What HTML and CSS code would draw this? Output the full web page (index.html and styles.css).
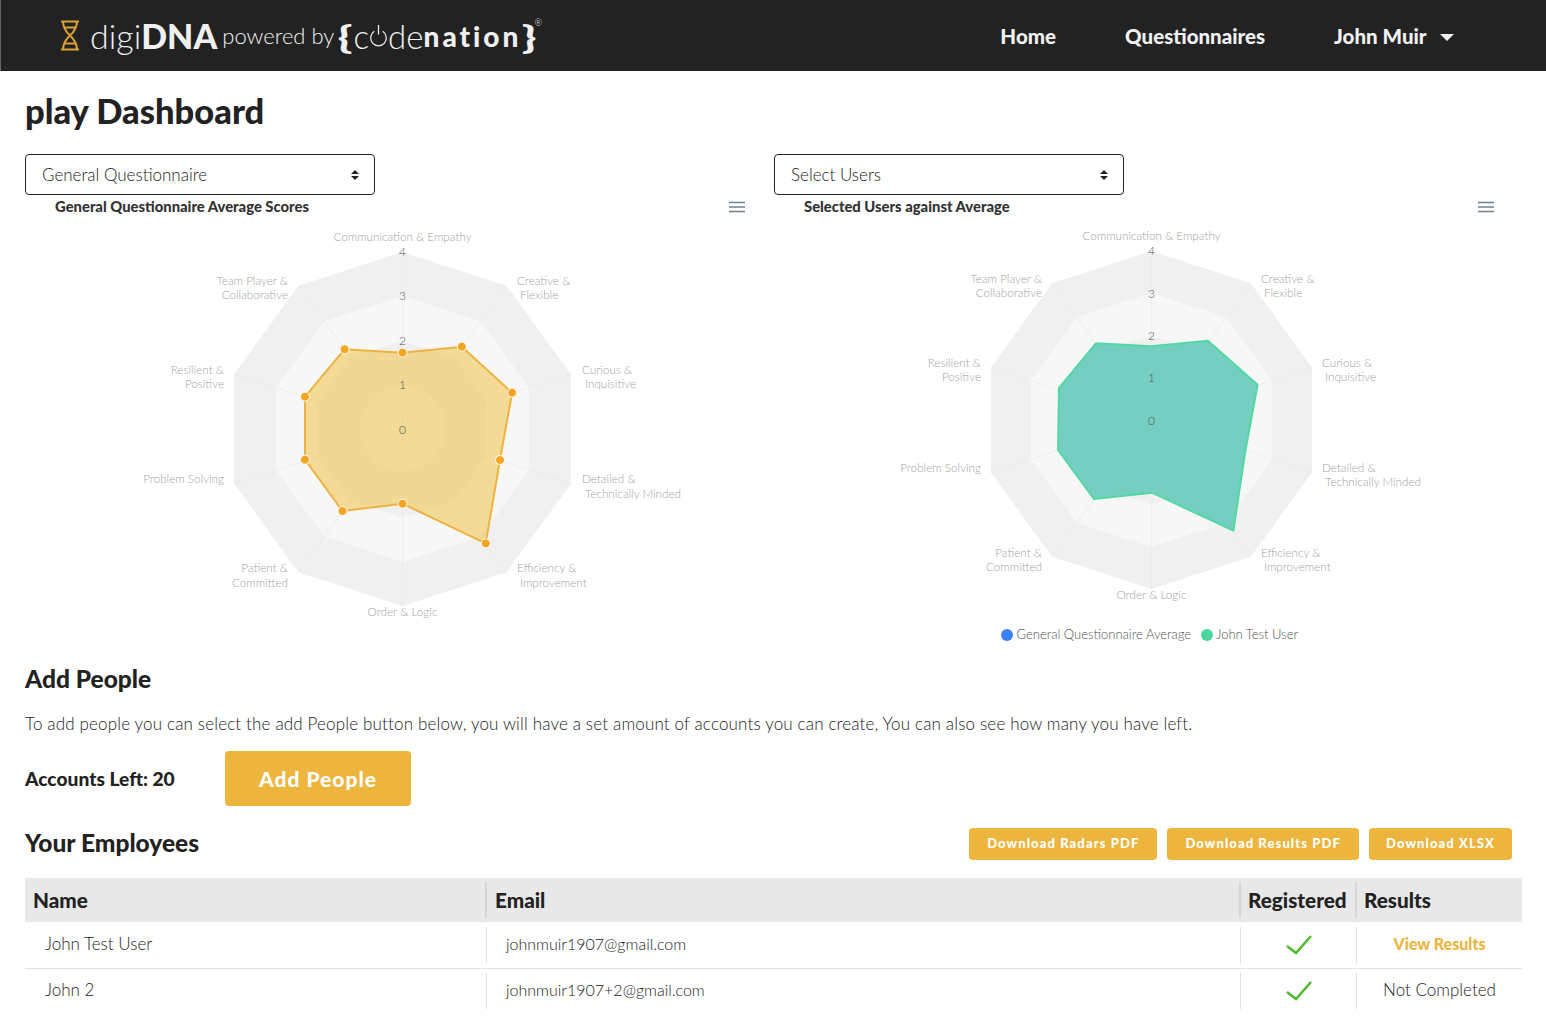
FILE: index.html
```html
<!DOCTYPE html>
<html lang="en">
<head>
    <meta charset="UTF-8">
    <meta name="viewport" content="width=device-width, initial-scale=1.0">
    <title>digiDNA Dashboard</title>
    <link rel="stylesheet" href="styles.css">
</head>
<body>
    <header class="topbar">
        <div class="logo">
            <svg class="logo-icon" viewBox="0 0 20 31" width="20" height="31">
                <path d="M3 1C3 7 5 11 10 15.500C15 20 17 24 17 30M17 1C17 7 15 11 10 15.500C5 20 3 24 3 30M1 1.500H19M4 7.500H16M4 23.500H16M1 29.500H19"/>
            </svg>
            <span class="logo-digi">digi<b>DNA</b></span>
            <span class="logo-by">powered by</span>
            <span class="logo-brace">{</span>
            <span class="logo-code">c<svg class="logo-power" viewBox="0 0 18 24" width="19" height="25"><path d="M5 8A7.500 7.500 0 1 0 13 8M9 2V11"/></svg>de</span>
            <span class="logo-nation">nation</span>
            <span class="logo-brace">}</span>
            <span class="logo-reg">®</span>
        </div>
        <nav class="nav">
            <a href="#">Home</a>
            <a href="#">Questionnaires</a>
            <a href="#" class="nav-user">John Muir <span class="caret"></span></a>
        </nav>
    </header>

    <main class="page">
        <h1>play Dashboard</h1>

        <div class="charts">
            <section>
                <div class="select">General Questionnaire <span class="updown"></span></div>
                <svg class="chart" viewBox="25 195 749 455" width="749" height="455">
                    <text class="chart-title" x="55" y="212">General Questionnaire Average Scores</text>
                    <path class="menu-icon" d="M729 202.500H745M729 207H745M729 211.500H745"/>

                    <g transform="translate(402.500 429)">
                        <polygon class="ring-a" transform="scale(1.77)" points="0,-100 58.800,-80.900 95.100,-30.900 95.100,30.900 58.800,80.900 0,100 -58.800,80.900 -95.100,30.900 -95.100,-30.900 -58.800,-80.900"/>
                        <polygon class="ring-b" transform="scale(1.33)" points="0,-100 58.800,-80.900 95.100,-30.900 95.100,30.900 58.800,80.900 0,100 -58.800,80.900 -95.100,30.900 -95.100,-30.900 -58.800,-80.900"/>
                        <polygon class="ring-a" transform="scale(.885)" points="0,-100 58.800,-80.900 95.100,-30.900 95.100,30.900 58.800,80.900 0,100 -58.800,80.900 -95.100,30.900 -95.100,-30.900 -58.800,-80.900"/>
                        <polygon class="ring-b" transform="scale(.44)" points="0,-100 58.800,-80.900 95.100,-30.900 95.100,30.900 58.800,80.900 0,100 -58.800,80.900 -95.100,30.900 -95.100,-30.900 -58.800,-80.900"/>
                        <path class="spokes" transform="scale(1.77)" d="M0 -100V100M58.800 -80.900L-58.800 80.900M95.100 -30.900L-95.100 30.900M95.100 30.900L-95.100 -30.900M58.800 80.900L-58.800 -80.900"/>
                    </g>

                    <polygon class="area-gold" points="402.500,352.700 461.800,346.700 512.100,392.700 500,460 485.700,543.300 402.500,503.700 342.500,511 305,459.700 305,396.700 344.600,349.300"/>
                    <g class="dots">
                        <circle cx="402.500" cy="352.700" r="4.500"/>
                        <circle cx="461.800" cy="346.700" r="4.500"/>
                        <circle cx="512.100" cy="392.700" r="4.500"/>
                        <circle cx="500" cy="460" r="4.500"/>
                        <circle cx="485.700" cy="543.300" r="4.500"/>
                        <circle cx="402.500" cy="503.700" r="4.500"/>
                        <circle cx="342.500" cy="511" r="4.500"/>
                        <circle cx="305" cy="459.700" r="4.500"/>
                        <circle cx="305" cy="396.700" r="4.500"/>
                        <circle cx="344.600" cy="349.300" r="4.500"/>
                    </g>

                    <g class="scale">
                        <text x="402.500" y="256">4</text>
                        <text x="402.500" y="300">3</text>
                        <text x="402.500" y="345">2</text>
                        <text x="402.500" y="389">1</text>
                        <text x="402.500" y="434">0</text>
                    </g>

                    <g class="labels">
                        <text x="402.500" y="241" text-anchor="middle">Communication &amp; Empathy</text>
                        <text x="517" y="285">Creative &amp;</text>
                        <text x="520" y="299">Flexible</text>
                        <text x="582" y="374">Curious &amp;</text>
                        <text x="585" y="388">Inquisitive</text>
                        <text x="582" y="483">Detailed &amp;</text>
                        <text x="585" y="498">Technically Minded</text>
                        <text x="517" y="572">Efficiency &amp;</text>
                        <text x="520" y="587">Improvement</text>
                        <text x="402.500" y="616" text-anchor="middle">Order &amp; Logic</text>
                        <text x="288" y="572" text-anchor="end">Patient &amp;</text>
                        <text x="288" y="587" text-anchor="end">Committed</text>
                        <text x="224" y="483" text-anchor="end">Problem Solving</text>
                        <text x="224" y="374" text-anchor="end">Resilient &amp;</text>
                        <text x="224" y="388" text-anchor="end">Positive</text>
                        <text x="288" y="285" text-anchor="end">Team Player &amp;</text>
                        <text x="288" y="299" text-anchor="end">Collaborative</text>
                    </g>
                </svg>
            </section>

            <section>
                <div class="select">Select Users <span class="updown"></span></div>
                <svg class="chart" viewBox="774 195 748 455" width="748" height="455">
                    <text class="chart-title" x="804" y="212">Selected Users against Average</text>
                    <path class="menu-icon" d="M1478 202.500H1494M1478 207H1494M1478 211.500H1494"/>

                    <g transform="translate(1151.500 420)">
                        <polygon class="ring-a" transform="scale(1.69)" points="0,-100 58.800,-80.900 95.100,-30.900 95.100,30.900 58.800,80.900 0,100 -58.800,80.900 -95.100,30.900 -95.100,-30.900 -58.800,-80.900"/>
                        <polygon class="ring-b" transform="scale(1.27)" points="0,-100 58.800,-80.900 95.100,-30.900 95.100,30.900 58.800,80.900 0,100 -58.800,80.900 -95.100,30.900 -95.100,-30.900 -58.800,-80.900"/>
                        <polygon class="ring-a" transform="scale(.845)" points="0,-100 58.800,-80.900 95.100,-30.900 95.100,30.900 58.800,80.900 0,100 -58.800,80.900 -95.100,30.900 -95.100,-30.900 -58.800,-80.900"/>
                        <polygon class="ring-b" transform="scale(.42)" points="0,-100 58.800,-80.900 95.100,-30.900 95.100,30.900 58.800,80.900 0,100 -58.800,80.900 -95.100,30.900 -95.100,-30.900 -58.800,-80.900"/>
                        <path class="spokes" transform="scale(1.69)" d="M0 -100V100M58.800 -80.900L-58.800 80.900M95.100 -30.900L-95.100 30.900M95.100 30.900L-95.100 -30.900M58.800 80.900L-58.800 -80.900"/>
                    </g>

                    <polygon class="area-green" points="1151,346.300 1207.900,340.700 1257.600,384.700 1245,453 1233.400,530.700 1152,492.700 1094,499 1058,450 1059,388 1096,343.300"/>

                    <g class="scale">
                        <text x="1151.500" y="255">4</text>
                        <text x="1151.500" y="298">3</text>
                        <text x="1151.500" y="340">2</text>
                        <text x="1151.500" y="382">1</text>
                        <text x="1151.500" y="425">0</text>
                    </g>

                    <g class="labels">
                        <text x="1151.500" y="240" text-anchor="middle">Communication &amp; Empathy</text>
                        <text x="1261" y="283">Creative &amp;</text>
                        <text x="1264" y="297">Flexible</text>
                        <text x="1322" y="367">Curious &amp;</text>
                        <text x="1325" y="381">Inquisitive</text>
                        <text x="1322" y="472">Detailed &amp;</text>
                        <text x="1325" y="486">Technically Minded</text>
                        <text x="1261" y="557">Efficiency &amp;</text>
                        <text x="1264" y="571">Improvement</text>
                        <text x="1151.500" y="599" text-anchor="middle">Order &amp; Logic</text>
                        <text x="1042" y="557" text-anchor="end">Patient &amp;</text>
                        <text x="1042" y="571" text-anchor="end">Committed</text>
                        <text x="981" y="472" text-anchor="end">Problem Solving</text>
                        <text x="981" y="367" text-anchor="end">Resilient &amp;</text>
                        <text x="981" y="381" text-anchor="end">Positive</text>
                        <text x="1042" y="283" text-anchor="end">Team Player &amp;</text>
                        <text x="1042" y="297" text-anchor="end">Collaborative</text>
                    </g>

                    <circle class="legend-blue" cx="1007" cy="635" r="6"/>
                    <text class="legend" x="1016.500" y="639">General Questionnaire Average</text>
                    <circle class="legend-green" cx="1207" cy="635" r="6"/>
                    <text class="legend" x="1216" y="639">John Test User</text>
                </svg>
            </section>
        </div>

        <h2 class="add-title">Add People</h2>
        <p class="add-text">To add people you can select the add People button below, you will have a set amount of accounts you can create, You can also see how many you have left.</p>
        <div class="accounts">
            <strong>Accounts Left: 20</strong>
            <button class="btn-add">Add People</button>
        </div>

        <div class="employees-head">
            <h2>Your Employees</h2>
            <div class="downloads">
                <button class="btn-small">Download Radars PDF</button>
                <button class="btn-small">Download Results PDF</button>
                <button class="btn-small">Download XLSX</button>
            </div>
        </div>

        <table class="employees">
            <colgroup>
                <col class="col-name">
                <col class="col-email">
                <col class="col-reg">
                <col class="col-res">
            </colgroup>
            <thead>
                <tr>
                    <th><div class="first">Name</div></th>
                    <th><div>Email</div></th>
                    <th><div class="tight">Registered</div></th>
                    <th><div class="tight">Results</div></th>
                </tr>
            </thead>
            <tbody>
                <tr>
                    <td><div class="first">John Test User</div></td>
                    <td><div class="email">johnmuir1907@gmail.com</div></td>
                    <td><div class="center"><svg class="tick" viewBox="0 0 26 20" width="26" height="20"><path d="M1 11L10 18L25 1"/></svg></div></td>
                    <td><div class="center"><a href="#" class="view-link">View Results</a></div></td>
                </tr>
                <tr>
                    <td><div class="first">John 2</div></td>
                    <td><div class="email">johnmuir1907+2@gmail.com</div></td>
                    <td><div class="center"><svg class="tick" viewBox="0 0 26 20" width="26" height="20"><path d="M1 11L10 18L25 1"/></svg></div></td>
                    <td><div class="center">Not Completed</div></td>
                </tr>
            </tbody>
        </table>
    </main>
</body>
</html>
```

FILE: styles.css
```css
body {
    margin: 0;
    font-family: "Lato", "Open Sans", sans-serif;
    font-weight: 300;
    font-size: 17px;
    color: #222;
    background: #fff;
}

.topbar {
    display: flex;
    justify-content: space-between;
    align-items: center;
    height: 71px;
    padding: 0 92px 0 60px;
    background: #222;
    border-left: 1px solid #666;
    box-sizing: border-box;
}

.logo {
    display: flex;
    align-items: center;
    color: #f0f0f0;
}

.logo-icon {
    margin: 0 10px 0 -1px;
    fill: none;
    stroke: #d9a233;
    stroke-width: 2;
}

.logo-digi {
    font-size: 34px;
    font-weight: 300;
    margin-right: 5px;
}

.logo-digi b {
    font-weight: 900;
}

.logo-by {
    font-size: 22px;
    margin-right: 3px;
}

.logo-brace {
    font-size: 33px;
    font-weight: 900;
    transform: scaleX(1.45);
    margin: 0 3px;
}

.logo-code {
    display: flex;
    align-items: center;
    font-size: 33px;
}

.logo-power {
    fill: none;
    stroke: #f0f0f0;
    stroke-width: 1.200;
}

.logo-nation {
    font-size: 28px;
    font-weight: 900;
    letter-spacing: 3px;
}

.logo-reg {
    align-self: flex-start;
    font-size: 9px;
    margin: 2px 0 0 -3px;
}

.nav {
    display: flex;
    align-items: center;
    gap: 69px;
}

.nav a {
    color: #f2f2f2;
    font-size: 20.500px;
    font-weight: 900;
    text-decoration: none;
}

.caret {
    display: inline-block;
    width: 0;
    height: 0;
    margin-left: 9px;
    vertical-align: 3px;
    border-left: 7px solid transparent;
    border-right: 7px solid transparent;
    border-top: 7px solid #f2f2f2;
}

.page {
    padding: 0 24px 0 25px;
}

h1 {
    margin: 20px 0 23px;
    font-size: 34.500px;
    line-height: 40px;
    font-weight: 900;
}

h2 {
    margin: 0;
    font-size: 24.500px;
    line-height: 30px;
    font-weight: 900;
}

.charts {
    display: grid;
    grid-template-columns: 749px 748px;
}

.select {
    display: flex;
    justify-content: space-between;
    align-items: center;
    box-sizing: border-box;
    width: 350px;
    height: 41px;
    padding: 0 15px 0 16px;
    border: 1px solid #222;
    border-radius: 4px;
}

.updown {
    display: block;
    width: 8px;
    height: 10px;
    position: relative;
}

.updown::before,
.updown::after {
    content: "";
    position: absolute;
    left: 0;
    border-left: 4px solid transparent;
    border-right: 4px solid transparent;
}

.updown::before {
    top: 0;
    border-bottom: 4px solid #222;
}

.updown::after {
    bottom: 0;
    border-top: 4px solid #222;
}

.chart {
    display: block;
    font-family: "Lato", "Open Sans", sans-serif;
}

.chart-title {
    font-size: 14.800px;
    font-weight: 900;
    fill: #333;
}

.menu-icon {
    fill: none;
    stroke: #6e8192;
    stroke-width: 1.500;
}

.ring-a {
    fill: #f0f0f0;
}

.ring-b {
    fill: #f7f7f7;
}

.spokes {
    fill: none;
    stroke: #e9e9e9;
    stroke-width: .4;
}

.area-gold {
    fill: #f1bd38;
    fill-opacity: .5;
    stroke: #edb341;
    stroke-width: 2;
    stroke-linejoin: round;
}

.area-green {
    fill: #74cfc2;
    stroke: #52d8a0;
    stroke-width: 2;
    stroke-linejoin: round;
}

.dots circle {
    fill: #f2a51f;
    stroke: #fff;
    stroke-width: 1;
}

.scale text {
    font-size: 12px;
    text-anchor: middle;
    fill: #555;
}

.labels text {
    font-size: 11.700px;
    fill: #a3a3a3;
}

.legend {
    font-size: 13px;
    fill: #555;
}

.legend-blue {
    fill: #3b82f6;
}

.legend-green {
    fill: #4cd7a0;
}

.add-title {
    margin-top: 14px;
}

.add-text {
    margin: 18px 0 0;
    line-height: 24px;
    letter-spacing: .16px;
}

.accounts {
    display: flex;
    align-items: center;
    gap: 50px;
    margin-top: 15px;
}

.accounts strong {
    width: 150px;
    font-size: 19.200px;
    font-weight: 900;
    white-space: nowrap;
}

.btn-add {
    width: 186px;
    height: 55px;
    border: none;
    border-radius: 4px;
    background: #ebb53e;
    color: #fff;
    font-family: inherit;
    font-size: 21px;
    font-weight: 900;
    letter-spacing: 1px;
}

.employees-head {
    display: flex;
    justify-content: space-between;
    align-items: center;
    margin-top: 22px;
}

.employees-head h2 {
    margin-bottom: 2px;
}

.downloads {
    display: flex;
    gap: 10px;
    padding-right: 10px;
}

.btn-small {
    height: 32px;
    padding: 0 18px 2px;
    border: none;
    border-radius: 4px;
    background: #ebb53e;
    color: #fff;
    font-family: inherit;
    font-size: 13px;
    font-weight: 900;
    letter-spacing: 1.100px;
}

.btn-small:last-child {
    padding: 0 17px 2px;
}

.employees {
    width: 1497px;
    margin-top: 18px;
    border-collapse: collapse;
    table-layout: fixed;
}

.col-name {
    width: 460px;
}

.col-email {
    width: 754px;
}

.col-reg {
    width: 116px;
}

.col-res {
    width: 167px;
}

.employees th {
    height: 44px;
    padding: 0;
    background: #e8e8e8;
    font-size: 20.700px;
    font-weight: 900;
    text-align: left;
}

.employees th div {
    height: 36px;
    line-height: 36px;
    padding-left: 8px;
    border-left: 2px solid #d6d6d6;
}

.employees th .first {
    border-left: none;
}

.employees th .tight {
    padding-left: 7px;
}

.employees td {
    height: 46px;
    padding: 0;
}

.employees tbody tr:first-child {
    border-bottom: 1px solid #e2e2e2;
}

.employees tbody tr:last-child td {
    height: 44px;
}

.employees td div {
    display: flex;
    align-items: center;
    box-sizing: border-box;
    height: 36px;
    margin-left: 1px;
    padding: 0 0 3px 19px;
    border-left: 1px solid #e0e0e0;
}

.employees td .first {
    margin-left: 0;
    padding-left: 20px;
    border-left: none;
}

.employees td .email {
    font-size: 16px;
}

.employees td .center {
    justify-content: center;
    padding-left: 0;
}

.tick {
    margin: 3px 0 0 1px;
    fill: none;
    stroke: #4dba2f;
    stroke-width: 2.500;
}

.view-link {
    color: #ebb53e;
    font-size: 16px;
    font-weight: 900;
    text-decoration: none;
}
```
